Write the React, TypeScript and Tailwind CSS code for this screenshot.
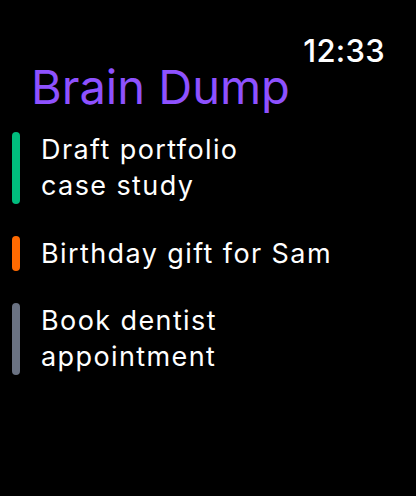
const items = [
  { id: 1, text: ['Draft portfolio', 'case study'], color: 'bg-emerald-500' },
  { id: 2, text: ['Birthday gift for Sam'], color: 'bg-orange-500' },
  { id: 3, text: ['Book dentist', 'appointment'], color: 'bg-gray-500' },
];

export default function App() {
  return (
    <div className="h-[496px] w-[416px] overflow-hidden bg-black font-['Inter',sans-serif] text-white">
      <div className="flex justify-end pr-[31px] pt-[33px]">
        <span className="text-[31px] font-medium leading-[36px] tracking-[0.3px]">12:33</span>
      </div>
      <h1 className="-mt-[8px] pl-[31px] text-[47px] leading-[52px] font-normal text-violet-500">
        Brain Dump
      </h1>
      <ul className="mt-[19px] flex flex-col gap-[32px] pl-[12px]">
        {items.map((item) => (
          <li key={item.id} className="flex items-stretch gap-[21px]">
            <div className={`w-[8px] shrink-0 rounded-full ${item.color}`} />
            <div className="text-[27px] leading-[35.75px] tracking-[1.4px]">
              {item.text.map((line) => (
                <div key={line}>{line}</div>
              ))}
            </div>
          </li>
        ))}
      </ul>
    </div>
  );
}
